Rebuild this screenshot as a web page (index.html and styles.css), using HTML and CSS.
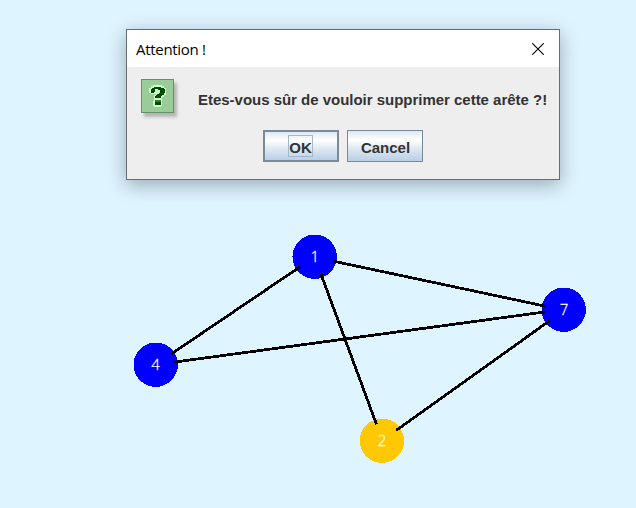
FILE: index.html
```
<!DOCTYPE html>
<html lang="fr">
<head>
<meta charset="utf-8">
<title>Attention !</title>
<link rel="stylesheet" href="styles.css">
</head>
<body>
<main class="canvas">
  <svg class="graph" width="636" height="508" viewBox="0 0 636 508">
    <g class="nodes" shape-rendering="crispEdges">
      <circle cx="314.7" cy="256.7" r="22.2"/>
      <circle cx="563.7" cy="309.7" r="22.2"/>
      <circle cx="155.7" cy="364.7" r="22.2"/>
      <circle class="selected" cx="381.9" cy="440.7" r="22.2"/>
    </g>
    <g class="edges" shape-rendering="crispEdges">
      <path d="M299 267.500L172 353.500M321.500 275.500L376 423M334 261.300L544.500 306M175 362L544.500 312M397.500 429.500L548.500 321.500"/>
    </g>
    <g class="labels">
      <text x="314.700" y="262">1</text>
      <text x="564" y="315">7</text>
      <text x="155.500" y="370">4</text>
      <text x="382" y="446">2</text>
    </g>
  </svg>
  <section class="dialog">
    <header class="titlebar">
      <span class="title">Attention !</span>
      <svg class="close" width="12" height="12" viewBox="0 0 12 12"><path d="M.3 .3L11.700 11.700M11.700 .3L.3 11.700"/></svg>
    </header>
    <div class="content">
      <div class="message">
        <div class="icon">
          <svg width="31" height="32" viewBox="0 0 31 32" shape-rendering="crispEdges">
            <path class="halo" d="M11 5H20V6H22V8H24V15H22V17H20V20H20V26H19V27H12V26H11V21H12V15H14V14H9V13H7V8H9V6H11Z"/>
            <path class="mark" d="M12 7H19V8H22V9H23V13H22V15H20V16H19V18H13V16H14V15H15V14H17V13H18V10H16V9H13V12H12V13H9V9H10V8H12ZM13 20H19V25H13Z"/>
            <path class="shine" d="M13 20H19V22H13Z"/>
          </svg>
        </div>
        <p class="question">Etes-vous sûr de vouloir supprimer cette arête ?!</p>
      </div>
      <div class="actions">
        <button class="button focused"><span class="focus">OK</span></button>
        <button class="button">Cancel</button>
      </div>
    </div>
  </section>
</main>
</body>
</html>
```

FILE: styles.css
```
* { box-sizing: border-box; }
body { margin: 0; background: #def4ff; }
.canvas { position: relative; width: 636px; height: 508px; overflow: hidden; background: #def4ff; }
.graph { display: block; }
.nodes { fill: #0000ff; }
.selected { fill: #ffc800; }
.edges { fill: none; stroke: #000; stroke-width: 2.8; stroke-linecap: square; }
.labels { fill: #fff; stroke: #fff; stroke-width: .3; font: 300 15px "Open Sans", sans-serif; text-anchor: middle; }
.dialog {
  position: absolute; left: 126px; top: 29px; width: 434px; height: 151px;
  border: 1px solid #666c70; background: #eee;
  box-shadow: 0 5px 18px rgba(0, 20, 30, .32);
}
.titlebar { display: flex; align-items: center; justify-content: space-between; height: 37px; padding: 0 15px 0 9px; background: #fff; }
.title { font: 15px/20px "Open Sans", sans-serif; letter-spacing: -.3px; color: #000; white-space: nowrap; }
.close { fill: none; stroke: #000; stroke-width: 1.1; }
.content { display: flex; flex-direction: column; gap: 17px; padding: 12px 11px 0 14px; }
.message { display: flex; gap: 24px; }
.icon { width: 33px; height: 34px; flex: none; border: 1px solid #669066; background: #99cc99; box-shadow: 3px 4px 3px rgba(0, 0, 0, .24); }
.icon svg { display: block; }
.halo { fill: #ccffcc; }
.mark { fill: #004d00; }
.shine { fill: #3c783c; }
.question { margin: 12px 0 0; font: bold 15px/18px "Liberation Sans", sans-serif; letter-spacing: -.02px; color: #333; white-space: nowrap; }
.actions { display: flex; gap: 8px; margin-left: 122px; }
.button {
  display: flex; align-items: center; justify-content: center; width: 76px; height: 32px; padding: 3px 0 0 1px;
  border: 1px solid #7a8a99; border-radius: 0;
  background: linear-gradient(#dde8f3, #fff 30%, #dfe9f3 58%, #b8cfe5);
  font: bold 15px/18px "Liberation Sans", sans-serif; color: #333;
}
.focused { border-width: 2px; padding: 0 1px 0 0; }
.focus { width: 25px; height: 22px; border: 1px solid #a3b8cc; padding-top: 2px; line-height: 20px; display: flex; justify-content: center; }
```
